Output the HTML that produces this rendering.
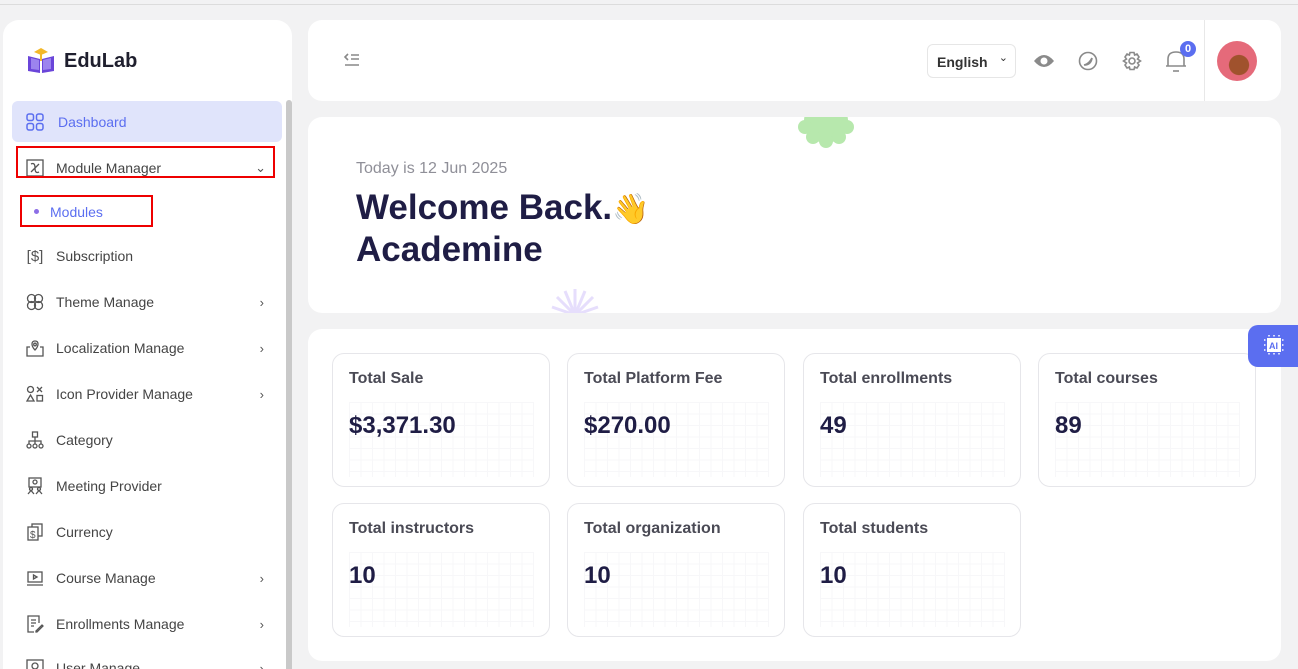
<!DOCTYPE html>
<html><head><meta charset="utf-8"><style>
*{box-sizing:border-box;margin:0;padding:0}
html,body{width:1298px;height:669px;overflow:hidden}
body{background:#f2f2f3;font-family:"Liberation Sans",sans-serif;position:relative;color:#444}
.topline{position:absolute;left:0;top:4px;width:1298px;height:1px;background:#dcdcdc}
.side{position:absolute;left:3px;top:20px;width:289px;height:649px;background:#fff;border-radius:16px 16px 0 0}
.scroll{position:absolute;left:286px;top:100px;width:6px;height:569px;background:#c9c9c9;border-radius:3px 3px 0 0}
.logo{position:absolute;left:26px;top:46px;display:flex;align-items:center}
.logo b{font-size:20px;color:#1f1f2e;margin-left:8px}
.item{position:absolute;left:12px;width:270px;height:40px;display:flex;align-items:center;font-size:14px;color:#444}
.item .ic{width:18px;height:18px;margin-left:14px;margin-right:12px;display:flex;align-items:center;justify-content:center}
.item .ar{position:absolute;right:18px;font-size:13px;color:#555}
.act{background:#e0e4fb;border-radius:6px;color:#5b6ef0}
.red{position:absolute;border:2px solid #e00}
.card{position:absolute;background:#fff;border-radius:14px}
.st{position:absolute;width:218px;height:134px;border:1px solid #e6e6ea;border-radius:12px;background:#fff}
.st .t{position:absolute;left:16px;top:16px;font-size:16px;font-weight:bold;color:#4a4a55}
.st .v{position:absolute;left:16px;top:58px;font-size:24px;font-weight:bold;color:#1f1d45}
.st .g{position:absolute;left:16px;top:48px;width:185px;height:75px;background-image:linear-gradient(#f7f7f9 1px,transparent 1px),linear-gradient(90deg,#f7f7f9 1px,transparent 1px);background-size:11.5px 11.5px}
.icn{position:absolute}
</style></head><body>
<div class="topline"></div>
<div class="side"></div>
<div class="scroll"></div>
<div class="logo">
<svg width="30" height="30" viewBox="0 0 30 30"><path d="M8 6 L15 2 L22 6 L15 9Z" fill="#f3b829"/><rect x="14" y="7" width="2" height="8" fill="#f3b829"/><path d="M2 10 L2 25 L14 27 L14 13Z" fill="#6a45d9"/><path d="M28 10 L28 25 L16 27 L16 13Z" fill="#6a45d9"/><path d="M5 12 L5 23 L13 24 L13 14Z" fill="#9c84ee"/><path d="M25 12 L25 23 L17 24 L17 14Z" fill="#9c84ee"/></svg>
<b>EduLab</b></div>

<div class="item act" style="top:101px;height:41px"><span class="ic"><svg width="18" height="18" viewBox="0 0 18 18" fill="none" stroke="#5b6ef0" stroke-width="1.5"><rect x="1" y="1" width="6.5" height="6.5" rx="2"/><rect x="10.5" y="1" width="6.5" height="6.5" rx="2"/><rect x="1" y="10.5" width="6.5" height="6.5" rx="2"/><rect x="10.5" y="10.5" width="6.5" height="6.5" rx="2"/></svg></span><span style="margin-left:2px">Dashboard</span></div>
<div class="item" style="top:148px"><span class="ic"><svg width="18" height="18" viewBox="0 0 18 18" fill="none" stroke="#555" stroke-width="1.3"><rect x="1" y="1" width="16" height="16"/><path d="M5 5 Q9 3 9 9 Q9 15 13 13 M5 13 Q9 9 13 5"/></svg></span><span>Module Manager</span><span class="ar" style="right:16px">&#8964;</span></div>
<div class="red" style="left:16px;top:146px;width:259px;height:32px"></div>
<div class="red" style="left:20px;top:195px;width:133px;height:32px"></div>
<div style="position:absolute;left:34px;top:209px;width:5px;height:5px;border-radius:50%;background:#8c6ee6"></div>
<div style="position:absolute;left:50px;top:204px;font-size:14px;color:#5b6ef0">Modules</div>

<div class="item" style="top:236px"><span class="ic" style="font-size:15px;color:#555">[$]</span><span>Subscription</span></div>
<div class="item" style="top:282px"><span class="ic"><svg width="18" height="18" viewBox="0 0 18 18" fill="none" stroke="#555" stroke-width="1.3"><circle cx="5.5" cy="5.5" r="4"/><circle cx="12.5" cy="5.5" r="4"/><circle cx="5.5" cy="12.5" r="4"/><circle cx="12.5" cy="12.5" r="4"/></svg></span><span>Theme Manage</span><span class="ar">&#8250;</span></div>
<div class="item" style="top:328px"><span class="ic"><svg width="18" height="18" viewBox="0 0 18 18" fill="none" stroke="#555" stroke-width="1.3"><path d="M9 11 C5 7 5 2 9 2 C13 2 13 7 9 11Z"/><circle cx="9" cy="5.5" r="1.3"/><path d="M4 8 L1 8 L1 17 L17 17 L17 8 L14 8"/></svg></span><span>Localization Manage</span><span class="ar">&#8250;</span></div>
<div class="item" style="top:374px"><span class="ic"><svg width="18" height="18" viewBox="0 0 18 18" fill="none" stroke="#555" stroke-width="1.3"><circle cx="4.5" cy="4.5" r="3"/><path d="M11 2 L16 7 M16 2 L11 7 M4.5 10 L8 16 L1 16Z"/><rect x="11" y="10.5" width="5.5" height="5.5"/></svg></span><span>Icon Provider Manage</span><span class="ar">&#8250;</span></div>
<div class="item" style="top:420px"><span class="ic"><svg width="18" height="18" viewBox="0 0 18 18" fill="none" stroke="#555" stroke-width="1.3"><rect x="6.5" y="1" width="5" height="5"/><path d="M9 6 V10 M3 13 V10 H15 V13 M9 10 V13"/><circle cx="3" cy="15" r="2"/><circle cx="9" cy="15" r="2"/><circle cx="15" cy="15" r="2"/></svg></span><span>Category</span></div>
<div class="item" style="top:466px"><span class="ic"><svg width="18" height="18" viewBox="0 0 18 18" fill="none" stroke="#555" stroke-width="1.3"><rect x="3" y="1" width="12" height="9"/><circle cx="9" cy="5" r="2"/><circle cx="5" cy="12" r="1.5"/><circle cx="13" cy="12" r="1.5"/><path d="M2 17 L5 13.5 L8 17 M10 17 L13 13.5 L16 17"/></svg></span><span>Meeting Provider</span></div>
<div class="item" style="top:512px"><span class="ic"><svg width="18" height="18" viewBox="0 0 18 18" fill="none" stroke="#555" stroke-width="1.3"><rect x="6" y="1" width="10" height="12"/><rect x="2" y="4" width="10" height="13" fill="#fff"/><text x="4" y="15" font-size="10" fill="#555" stroke="none" font-family="Liberation Sans">$</text></svg></span><span>Currency</span></div>
<div class="item" style="top:558px"><span class="ic"><svg width="18" height="18" viewBox="0 0 18 18" fill="none" stroke="#555" stroke-width="1.3"><rect x="2" y="3" width="14" height="10"/><path d="M1 16 H17 M7.5 6 L11 8 L7.5 10Z"/></svg></span><span>Course Manage</span><span class="ar">&#8250;</span></div>
<div class="item" style="top:604px"><span class="ic"><svg width="18" height="18" viewBox="0 0 18 18" fill="none" stroke="#555" stroke-width="1.3"><path d="M13 8 V1 H2 V17 H8"/><path d="M5 5 H10 M5 8 H10 M5 11 H8 M10 16 L16 10 L17 11 L11 17 H10Z"/></svg></span><span>Enrollments Manage</span><span class="ar">&#8250;</span></div>
<div class="item" style="top:648px"><span class="ic"><svg width="18" height="18" viewBox="0 0 18 18" fill="none" stroke="#555" stroke-width="1.3"><rect x="1" y="1" width="16" height="16"/><circle cx="9" cy="7" r="3"/></svg></span><span>User Manage</span><span class="ar">&#8250;</span></div>

<!-- header -->
<div class="card" style="left:308px;top:20px;width:973px;height:81px"></div>
<svg class="icn" style="left:343px;top:53px" width="18" height="14" viewBox="0 0 18 14" fill="none" stroke="#888" stroke-width="1.6"><path d="M5 1 L2 4 L5 7 M8 2 H16 M8 6 H16 M2 12 H16"/></svg>
<div style="position:absolute;left:927px;top:44px;width:89px;height:34px;border:1px solid #e6e6e6;border-radius:6px;font-size:14px;font-weight:bold;color:#333;padding:9px 0 0 9px">English<span style="position:absolute;right:7px;top:6px;font-size:11px;font-weight:normal">&#8964;</span></div>
<svg class="icn" style="left:1033px;top:52px" width="22" height="18" viewBox="0 0 22 18"><path d="M1 9 Q11 -3 21 9 Q11 21 1 9Z" fill="#8a8a8a"/><circle cx="11" cy="9" r="3.5" fill="#fff"/></svg>
<svg class="icn" style="left:1078px;top:51px" width="20" height="20" viewBox="0 0 20 20" fill="none" stroke="#8a8a8a" stroke-width="1.6"><circle cx="10" cy="10" r="8.5"/><path d="M14 7 Q13 14 6 14 Q11 13 14 7Z" fill="#8a8a8a"/></svg>
<svg class="icn" style="left:1122px;top:51px" width="20" height="20" viewBox="0 0 20 20" fill="none" stroke="#8a8a8a" stroke-width="1.6"><path d="M8 1.5 H12 L12.6 4 L15 3 L17 6 L15.5 8 L18.5 10 L15.5 12 L17 14 L15 17 L12.6 16 L12 18.5 H8 L7.4 16 L5 17 L3 14 L4.5 12 L1.5 10 L4.5 8 L3 6 L5 3 L7.4 4Z"/><circle cx="10" cy="10" r="3"/></svg>
<svg class="icn" style="left:1165px;top:49px" width="22" height="24" viewBox="0 0 22 24" fill="none" stroke="#8a8a8a" stroke-width="1.6"><path d="M3 17 V10 Q3 3 11 3 Q19 3 19 10 V17 H1 H21"/><path d="M8 22 H14"/></svg>
<div style="position:absolute;left:1180px;top:41px;width:16px;height:16px;border-radius:50%;background:#5b6ef0;color:#fff;font-size:11px;font-weight:bold;text-align:center;line-height:16px">0</div>
<div style="position:absolute;left:1204px;top:20px;width:1px;height:81px;background:#e8e8e8"></div>
<div style="position:absolute;left:1217px;top:41px;width:40px;height:40px;border-radius:50%;background:radial-gradient(circle at 55% 60%,#a0522d 0 30%,#e56a7a 32%)"></div>

<!-- hero -->
<div class="card" style="left:308px;top:117px;width:973px;height:196px;overflow:hidden">
<svg style="position:absolute;left:488px;top:-12px" width="60" height="44" viewBox="0 0 60 44"><g fill="#b7e8ad"><circle cx="30" cy="16" r="22"/><circle cx="30" cy="36" r="7"/><circle cx="17" cy="32" r="7"/><circle cx="43" cy="32" r="7"/><circle cx="9" cy="22" r="7"/><circle cx="51" cy="22" r="7"/></g></svg>
<svg style="position:absolute;left:242px;top:170px" width="50" height="30" viewBox="0 0 50 30" stroke="#e6defc" stroke-width="3"><g><line x1="25" y1="28" x2="25" y2="2"/><line x1="25" y1="28" x2="15" y2="4"/><line x1="25" y1="28" x2="35" y2="4"/><line x1="25" y1="28" x2="7" y2="10"/><line x1="25" y1="28" x2="43" y2="10"/><line x1="25" y1="28" x2="2" y2="20"/><line x1="25" y1="28" x2="48" y2="20"/></g></svg>
<div style="position:absolute;left:48px;top:43px;font-size:16px;color:#8f8f98">Today is 12 Jun 2025</div>
<div style="position:absolute;left:48px;top:71px;font-size:35px;font-weight:bold;color:#1f1d45;line-height:40px">Welcome Back.<span style="font-size:30px">👋</span><br>Academine</div>
</div>

<!-- stats -->
<div class="card" style="left:308px;top:329px;width:973px;height:332px"></div>
<div class="st" style="left:332px;top:353px"><div class="g"></div><div class="t">Total Sale</div><div class="v">$3,371.30</div></div>
<div class="st" style="left:567px;top:353px"><div class="g"></div><div class="t">Total Platform Fee</div><div class="v">$270.00</div></div>
<div class="st" style="left:803px;top:353px"><div class="g"></div><div class="t">Total enrollments</div><div class="v">49</div></div>
<div class="st" style="left:1038px;top:353px"><div class="g"></div><div class="t">Total courses</div><div class="v">89</div></div>
<div class="st" style="left:332px;top:503px"><div class="g"></div><div class="t">Total instructors</div><div class="v">10</div></div>
<div class="st" style="left:567px;top:503px"><div class="g"></div><div class="t">Total organization</div><div class="v">10</div></div>
<div class="st" style="left:803px;top:503px"><div class="g"></div><div class="t">Total students</div><div class="v">10</div></div>

<div style="position:absolute;left:1248px;top:325px;width:50px;height:42px;background:#5b6ef0;border-radius:10px 0 0 10px"></div>
<svg class="icn" style="left:1264px;top:335px" width="20" height="20" viewBox="0 0 20 20"><rect x="3" y="3" width="14" height="14" fill="#fff"/><g stroke="#fff" stroke-width="1.5" stroke-dasharray="1.5 1.5"><path d="M5 0 V2 M10 0 V2 M15 0 V2 M5 18 V20 M10 18 V20 M15 18 V20 M0 5 H2 M0 10 H2 M0 15 H2 M18 5 H20 M18 10 H20 M18 15 H20"/></g><text x="5" y="14" font-size="9" font-weight="bold" fill="#5b6ef0" font-family="Liberation Sans">AI</text></svg>
</body></html>
